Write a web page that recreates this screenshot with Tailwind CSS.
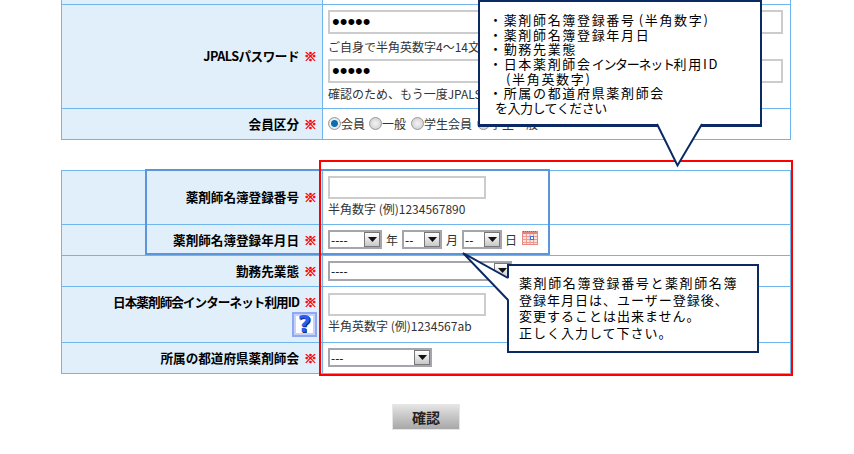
<!DOCTYPE html>
<html lang="ja">
<head>
<meta charset="UTF-8">
<title>会員登録</title>
<script src="https://cdn.jsdelivr.net/npm/@tailwindcss/browser@4"></script>
</head>
<body class="bg-white font-['Noto_Sans_CJK_JP','Noto_Sans',sans-serif] text-black">
<div class="relative w-[854px] h-[454px] overflow-hidden">

  <!-- upper table -->
  <table class="table-fixed w-[730px] ml-[61px] border-collapse text-[12px]">
    <colgroup><col class="w-[261px]"><col></colgroup>
    <tr>
      <td class="h-[4px] p-0 border-x border-b border-[#6fb5ee] bg-[#e1effb]"></td>
      <td class="h-[4px] p-0 border-x border-b border-[#6fb5ee]"></td>
    </tr>
    <tr>
      <th class="h-[104px] p-0 pr-[5px] border border-[#6fb5ee] bg-[#e1effb] text-right font-bold text-[12.6px] tracking-[-0.5px]">JPALSパスワード<span class="ml-[5px] text-[13px] font-black tracking-normal text-[#ff0000] [-webkit-text-stroke:0.5px_#ff0000]">※</span></th>
      <td class="p-0 pl-[5px] align-top border border-[#6fb5ee] text-[#333]">
        <input type="password" value="12345" class="block w-[455px] h-[24px] mt-[5px] px-[2px] border-2 border-[#cccccc] font-['Liberation_Sans',sans-serif] text-[22px] leading-none text-black">
        <p class="h-[25px] leading-[25px] whitespace-nowrap">ご自身で半角英数字4～14文字で入力してください</p>
        <input type="password" value="12345" class="block w-[455px] h-[24px] px-[2px] border-2 border-[#cccccc] font-['Liberation_Sans',sans-serif] text-[22px] leading-none text-black">
        <p class="h-[20px] leading-[21px] whitespace-nowrap">確認のため、もう一度JPALSパスワードを入力してください</p>
      </td>
    </tr>
    <tr>
      <th class="h-[31px] p-0 pr-[5px] border border-[#6fb5ee] bg-[#e1effb] text-right font-bold text-[12.6px]">会員区分<span class="ml-[5px] text-[13px] font-black text-[#ff0000] [-webkit-text-stroke:0.5px_#ff0000]">※</span></th>
      <td class="p-0 pl-[5px] border border-[#6fb5ee] text-[#333]">
        <div class="flex items-center text-[12px]">
          <input type="radio" name="kubun" checked class="appearance-none w-[13px] h-[13px] rounded-full border border-[#999] bg-[radial-gradient(circle,#0a6fb0_0,#0a6fb0_3px,#f0f0f0_4px,#c8c8c8_100%)]">
          <span class="mr-[4px]">会員</span>
          <input type="radio" name="kubun" class="appearance-none w-[13px] h-[13px] rounded-full border border-[#999] bg-[radial-gradient(circle,#f4f4f4_0,#c8c8c8_100%)]">
          <span class="mr-[5px]">一般</span>
          <input type="radio" name="kubun" class="appearance-none w-[13px] h-[13px] rounded-full border border-[#999] bg-[radial-gradient(circle,#f4f4f4_0,#c8c8c8_100%)]">
          <span class="mr-[5px]">学生会員</span>
          <input type="radio" name="kubun" class="appearance-none w-[13px] h-[13px] rounded-full border border-[#999] bg-[radial-gradient(circle,#f4f4f4_0,#c8c8c8_100%)]">
          <span>学生一般</span>
        </div>
      </td>
    </tr>
  </table>

  <!-- lower table -->
  <table class="table-fixed w-[730px] ml-[61px] mt-[30px] border-collapse text-[12px]">
    <colgroup><col class="w-[261px]"><col></colgroup>
    <tr>
      <th class="h-[54px] p-0 pr-[5px] border border-[#6fb5ee] bg-[#e1effb] text-right font-bold text-[12.6px]">薬剤師名簿登録番号<span class="ml-[5px] text-[13px] font-black text-[#ff0000] [-webkit-text-stroke:0.5px_#ff0000]">※</span></th>
      <td class="p-0 pl-[5px] align-top border border-[#6fb5ee] text-[#333]">
        <input type="text" class="block w-[158px] h-[23px] mt-[5px] border-2 border-[#cccccc]">
        <p class="h-[22px] leading-[20px]">半角数字 (例)1234567890</p>
      </td>
    </tr>
    <tr>
      <th class="h-[31px] p-0 pr-[5px] border border-[#6fb5ee] bg-[#e1effb] text-right font-bold text-[12.6px]">薬剤師名簿登録年月日<span class="ml-[5px] text-[13px] font-black text-[#ff0000] [-webkit-text-stroke:0.5px_#ff0000]">※</span></th>
      <td class="p-0 pl-[5px] border border-[#6fb5ee] text-[#333]">
        <div class="flex items-center">
          <span class="relative block w-[54px] h-[19px]">
            <select class="appearance-none block w-full h-full pl-[1px] border-2 border-[#a5a5ac] text-[12px] leading-none text-black"><option>----</option></select>
            <span class="absolute right-[2px] top-[2px] w-[16px] h-[15px] flex items-center justify-center border border-[#777] bg-gradient-to-b from-white to-[#c8c8c8]"><svg width="9" height="5" viewBox="0 0 9 5"><path d="M0 0h9L4.500 5z" fill="#111"/></svg></span>
          </span>
          <span class="ml-[4px] w-[16px]">年</span>
          <span class="relative block w-[40px] h-[19px]">
            <select class="appearance-none block w-full h-full pl-[1px] border-2 border-[#a5a5ac] text-[12px] leading-none text-black"><option>--</option></select>
            <span class="absolute right-[2px] top-[2px] w-[16px] h-[15px] flex items-center justify-center border border-[#777] bg-gradient-to-b from-white to-[#c8c8c8]"><svg width="9" height="5" viewBox="0 0 9 5"><path d="M0 0h9L4.500 5z" fill="#111"/></svg></span>
          </span>
          <span class="ml-[4px] w-[16px]">月</span>
          <span class="relative block w-[40px] h-[19px]">
            <select class="appearance-none block w-full h-full pl-[1px] border-2 border-[#a5a5ac] text-[12px] leading-none text-black"><option>--</option></select>
            <span class="absolute right-[2px] top-[2px] w-[16px] h-[15px] flex items-center justify-center border border-[#777] bg-gradient-to-b from-white to-[#c8c8c8]"><svg width="9" height="5" viewBox="0 0 9 5"><path d="M0 0h9L4.500 5z" fill="#111"/></svg></span>
          </span>
          <span class="ml-[3px] w-[17px]">日</span>
          <svg class="-mt-[5px]" width="16" height="15" viewBox="0 0 16 15">
            <rect x="0.500" y="1.500" width="15" height="13" fill="#fbe3df" stroke="#e58a80"/>
            <path d="M1 1.500h14" stroke="#a85a52" stroke-dasharray="1 1" fill="none"/>
            <rect x="1" y="2" width="14" height="2" fill="#e8837a"/>
            <path d="M1 6.500h14M1 9.500h14M1 12.500h14M4.500 4v10M8 4v10M11.500 4v10" stroke="#ee9a90" fill="none"/>
            <rect x="8.500" y="6.500" width="3" height="3" fill="#ffffff" stroke="#3f6fe0"/>
          </svg>
        </div>
      </td>
    </tr>
    <tr>
      <th class="h-[31px] p-0 pr-[5px] border border-[#6fb5ee] bg-[#e1effb] text-right font-bold text-[12.6px]">勤務先業態<span class="ml-[5px] text-[13px] font-black text-[#ff0000] [-webkit-text-stroke:0.5px_#ff0000]">※</span></th>
      <td class="p-0 pl-[5px] border border-[#6fb5ee]">
        <span class="relative block w-[184px] h-[20px]">
          <select class="appearance-none block w-full h-full pl-[1px] border-2 border-[#a5a5ac] text-[12px] leading-none"><option>----</option></select>
          <span class="absolute right-[2px] top-[2px] w-[16px] h-[16px] flex items-center justify-center border border-[#777] bg-gradient-to-b from-white to-[#c8c8c8]"><svg width="9" height="5" viewBox="0 0 9 5"><path d="M0 0h9L4.500 5z" fill="#111"/></svg></span>
        </span>
      </td>
    </tr>
    <tr>
      <th class="h-[56px] p-0 pr-[5px] pt-[5px] align-top border border-[#6fb5ee] bg-[#e1effb] text-right font-bold text-[12.6px]">
        <div class="leading-[19px] tracking-[-0.95px]">日本薬剤師会インターネット利用ID<span class="ml-[5px] text-[13px] font-black tracking-normal text-[#ff0000] [-webkit-text-stroke:0.5px_#ff0000]">※</span></div>
        <div class="flex justify-end mt-[1px]">
          <span class="block w-[25px] h-[25px] border-2 border-[#8ea8f2]">
            <span class="flex items-center justify-center w-full h-full border-2 border-[#c5d2fa] bg-white font-['DejaVu_Sans',sans-serif] text-[23px] leading-none font-bold text-[#2a5cf0] [text-shadow:1px_1px_0_#102a80]">?</span>
          </span>
        </div>
      </th>
      <td class="p-0 pl-[5px] align-top border border-[#6fb5ee] text-[#333]">
        <input type="text" class="block w-[158px] h-[23px] mt-[6px] border-2 border-[#cccccc]">
        <p class="h-[22px] leading-[20px]">半角英数字 (例)1234567ab</p>
      </td>
    </tr>
    <tr>
      <th class="h-[31px] p-0 pr-[5px] border border-[#6fb5ee] bg-[#e1effb] text-right font-bold text-[12.6px]">所属の都道府県薬剤師会<span class="ml-[5px] text-[13px] font-black text-[#ff0000] [-webkit-text-stroke:0.5px_#ff0000]">※</span></th>
      <td class="p-0 pl-[5px] border border-[#6fb5ee]">
        <span class="relative block w-[104px] h-[19px]">
          <select class="appearance-none block w-full h-full pl-[1px] border-2 border-[#a5a5ac] text-[12px] leading-none"><option>---</option></select>
          <span class="absolute right-[2px] top-[2px] w-[16px] h-[15px] flex items-center justify-center border border-[#777] bg-gradient-to-b from-white to-[#c8c8c8]"><svg width="9" height="5" viewBox="0 0 9 5"><path d="M0 0h9L4.500 5z" fill="#111"/></svg></span>
        </span>
      </td>
    </tr>
  </table>

  <div class="flex justify-center w-[852px] mt-[30px]">
    <button type="button" class="w-[68px] h-[26px] border border-[#e6e6e6] bg-gradient-to-b from-[#e4e4e4] to-[#a8a8a8] text-[14px] font-bold leading-none text-[#222]">確認</button>
  </div>

  <!-- highlight boxes -->
  <div class="absolute left-[145px] top-[169px] w-[405px] h-[86px] border-[2px] border-[#5b96dc]"></div>
  <div class="absolute left-[319px] top-[160px] w-[474px] h-[216px] border-2 border-[#ff0000]"></div>

  <!-- balloon top -->
  <div class="absolute left-[478px] top-0 w-[284px] h-[127px] border-2 border-[#0b2a63] border-b-[3px] bg-white pl-[9px] pt-[11px] text-[13px] leading-[14.67px] tracking-[1.67px] whitespace-nowrap text-black">
    <p>・薬剤師名簿登録番号<span class="ml-[3px]">(半角数字)</span></p>
    <p>・薬剤師名簿登録年月日</p>
    <p>・勤務先業態</p>
    <p>・日本薬剤師会<span class="tracking-[-1.3px]">インターネット</span>利用ID</p>
    <p class="pl-[17px]">(半角英数字)</p>
    <p>・所属の都道府県薬剤師会</p>
    <p class="pl-[6px] tracking-[-0.5px]">を入力してください</p>
  </div>
  <svg class="absolute left-[650px] top-[120px]" width="60" height="50" viewBox="0 0 60 50">
    <path d="M7 3 L27.500 45.500 L52 3 Z" fill="#fff"/>
    <path d="M7 4 L27.500 45.500 L52 4" fill="none" stroke="#0b2a63" stroke-width="2"/>
  </svg>

  <!-- balloon bottom -->
  <div class="absolute left-[507px] top-[264px] w-[252px] h-[89px] border-2 border-[#0b2a63] bg-white pl-[10px] pt-[9px] text-[13px] leading-[16.6px] tracking-[1px] whitespace-nowrap text-black">
    <p class="tracking-[1.6px]">薬剤師名簿登録番号と薬剤師名簿</p>
    <p>登録年月日は、ユーザー登録後、</p>
    <p>変更することは出来ません。</p>
    <p>正しく入力して下さい。</p>
  </div>
  <svg class="absolute left-[460px] top-[250px]" width="55" height="55" viewBox="0 0 55 55">
    <path d="M3 3 L50 29 L50 51 Z" fill="#fff"/>
    <path d="M48 28 L3 3 L48 50" fill="none" stroke="#0b2a63" stroke-width="2"/>
  </svg>
</div>
</body>
</html>
